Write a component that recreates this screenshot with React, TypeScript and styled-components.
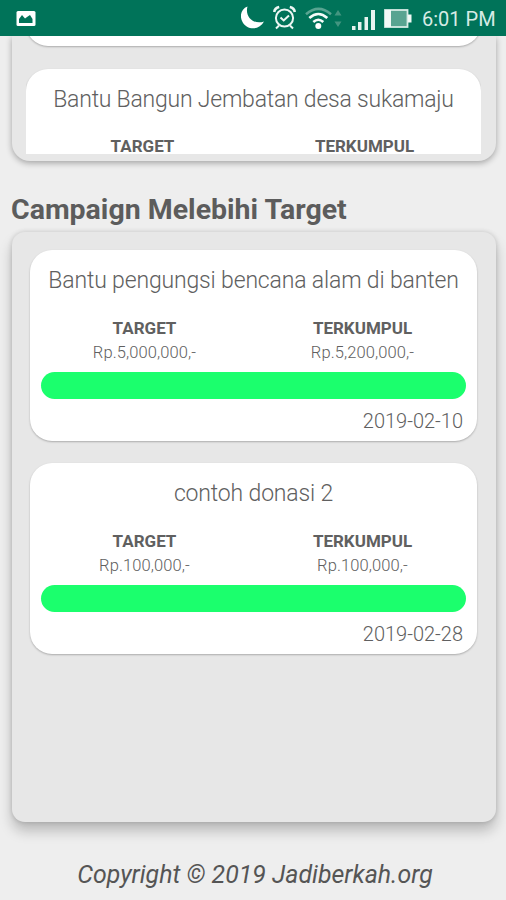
import React from "react";
import styled, { createGlobalStyle } from "styled-components";

const GlobalStyle = createGlobalStyle`
  * { box-sizing: border-box; }
  body { margin: 0; background: #eeeeee; font-family: Roboto, "Liberation Sans", sans-serif; color: #606060; }
`;

const Screen = styled.div`
  width: 506px;
  height: 900px;
  overflow: hidden;
  background: #eeeeee;
  display: flex;
  flex-direction: column;
`;

const StatusBar = styled.header`
  height: 36px;
  flex: none;
  background: #007359;
  display: flex;
  justify-content: space-between;
  z-index: 1;
`;

const StatusIcons = styled.svg`
  display: block;
  flex: none;
`;

const StatusRight = styled.div`
  display: flex;
`;

const Clock = styled.span`
  width: 85px;
  padding-left: 1px;
  font-size: 20px;
  line-height: 38px;
  color: #d6ebe5;
  white-space: nowrap;
`;

const Panel = styled.section<{ $clipped?: boolean }>`
  flex: none;
  width: 484px;
  margin-left: 12px;
  background: #e7e7e7;
  height: ${(p) => (p.$clipped ? "125px" : "590px")};
  padding: ${(p) => (p.$clipped ? "0 15px 7px 14px" : "18px 19px 0 18px")};
  border-radius: ${(p) => (p.$clipped ? "0 0 18px 18px" : "13px")};
  box-shadow: ${(p) =>
    p.$clipped
      ? "0 2px 6px rgba(0, 0, 0, 0.32)"
      : "0 9px 13px rgba(0, 0, 0, 0.22), 0 0 5px rgba(0, 0, 0, 0.16)"};
`;

const CardList = styled.div<{ $clipped?: boolean }>`
  display: flex;
  flex-direction: column;
  gap: ${(p) => (p.$clipped ? "23px" : "22px")};
  height: ${(p) => (p.$clipped ? "118px" : "auto")};
  overflow: ${(p) => (p.$clipped ? "hidden" : "visible")};
`;

const CardBox = styled.article`
  flex: none;
  height: 191px;
  padding: 0 11px;
  border-radius: 22px;
  background: #ffffff;
  box-shadow: 0 1px 2px rgba(0, 0, 0, 0.26);
`;

const CardEnd = styled.div`
  flex: none;
  height: 191px;
  margin-top: -181px;
  border-radius: 22px;
  background: #ffffff;
  box-shadow: 0 1px 2px rgba(0, 0, 0, 0.26);
`;

const CardTitle = styled.h2<{ $compact?: boolean }>`
  margin: 0;
  padding-top: 15px;
  height: ${(p) => (p.$compact ? "65px" : "66px")};
  text-align: center;
  font-size: 23px;
  line-height: 31px;
  font-weight: 350;
  letter-spacing: ${(p) => (p.$compact ? "-0.22px" : "-0.16px")};
  white-space: nowrap;
`;

const Amounts = styled.div`
  display: grid;
  grid-template-columns: 1fr 1fr;
  column-gap: 11px;
  height: 56px;
  text-align: center;
`;

const Label = styled.div`
  font-size: 17px;
  line-height: 24px;
  font-weight: 700;
`;

const Amount = styled.div`
  font-size: 16.5px;
  line-height: 25px;
  letter-spacing: 0.1px;
  font-weight: 350;
`;

const Progress = styled.div`
  height: 27px;
  border-radius: 14px;
  background: #1bff6d;
`;

const DateText = styled.div`
  padding-right: 3px;
  text-align: right;
  font-size: 20px;
  line-height: 44px;
  font-weight: 350;
`;

const Heading = styled.h1`
  flex: none;
  height: 71px;
  margin: 0;
  padding: 32px 0 0 11px;
  font-size: 28.5px;
  line-height: 33px;
  font-weight: 700;
  color: #5c5c5c;
`;

const Footer = styled.footer`
  flex: 1;
  padding: 36px 0 0 4px;
  text-align: center;
  font-size: 24.9px;
  line-height: 34px;
  font-style: italic;
  color: #555555;
  white-space: nowrap;
`;

interface CardProps {
  title: string;
  target?: string;
  raised?: string;
  date?: string;
  compact?: boolean;
}

function Card({ title, target, raised, date, compact }: CardProps) {
  return (
    <CardBox>
      <CardTitle $compact={compact}>{title}</CardTitle>
      <Amounts>
        <div>
          <Label>TARGET</Label>
          <Amount>{target}</Amount>
        </div>
        <div>
          <Label>TERKUMPUL</Label>
          <Amount>{raised}</Amount>
        </div>
      </Amounts>
      <Progress />
      <DateText>{date}</DateText>
    </CardBox>
  );
}

export default function App() {
  return (
    <Screen>
      <GlobalStyle />
      <StatusBar>
        <StatusIcons width="50" height="36" viewBox="0 0 50 36">
          <rect x="16.5" y="11" width="19" height="15" rx="1.5" fill="#fff" />
          <path d="M19 23v-4l3-4 3 3.5 2-1.5 3-2 2.5 4v4z" fill="#007359" />
        </StatusIcons>
        <StatusRight>
          <StatusIcons width="180" height="36" viewBox="241 0 180 36">
            <path d="M247.5 6.5C241 9 239.200 16 242.500 22c4.500 8.500 17 8.500 21.500-.500C254 25 244.500 17 247.500 6.500z" fill="#fff" />
            <g fill="none" stroke="#edf7f4" strokeWidth="2">
              <circle cx="284.500" cy="18" r="8.600" />
              <path d="M280.500 17.500l3.200 3 5.300-5M279 25.500l-3 3M290 25.500l3 3" />
              <path d="M274.200 12q.6-4 5-5M294.800 12q-.6-4-5-5" strokeWidth="2.600" />
            </g>
            <g fill="none" strokeWidth="2.600">
              <path d="M306 14.200q12.500-10.500 25 0" stroke="#58a491" />
              <path d="M309.300 18q9-8 18 0M313.300 22q5-4.500 10 0" stroke="#f5fbf9" />
            </g>
            <circle cx="318.300" cy="26" r="3" fill="#fff" />
            <path d="M334.500 15.500l3.500-5.500 3.500 5.500zM334.500 21.500l3.500 5.500 3.500-5.500z" fill="#429580" />
            <path d="M352 26h3.500v4H352zM358 22h3.500v8H358zM364.500 17h3.500v13h-3.500zM371 10h4v20h-4z" fill="#e7f4f0" />
            <rect x="385" y="10" width="22.500" height="17" fill="#58a491" stroke="#d6ebe5" strokeWidth="1.800" />
            <path d="M385 10h6v17h-6zM408 14.500h3.500v8H408z" fill="#f1f9f6" />
          </StatusIcons>
          <Clock>6:01 PM</Clock>
        </StatusRight>
      </StatusBar>
      <Panel $clipped>
        <CardList $clipped>
          <CardEnd />
          <Card title="Bantu Bangun Jembatan desa sukamaju" compact />
        </CardList>
      </Panel>
      <Heading>Campaign Melebihi Target</Heading>
      <Panel>
        <CardList>
          <Card title="Bantu pengungsi bencana alam di banten" target="Rp.5,000,000,-" raised="Rp.5,200,000,-" date="2019-02-10" />
          <Card title="contoh donasi 2" target="Rp.100,000,-" raised="Rp.100,000,-" date="2019-02-28" />
        </CardList>
      </Panel>
      <Footer>Copyright © 2019 Jadiberkah.org</Footer>
    </Screen>
  );
}
